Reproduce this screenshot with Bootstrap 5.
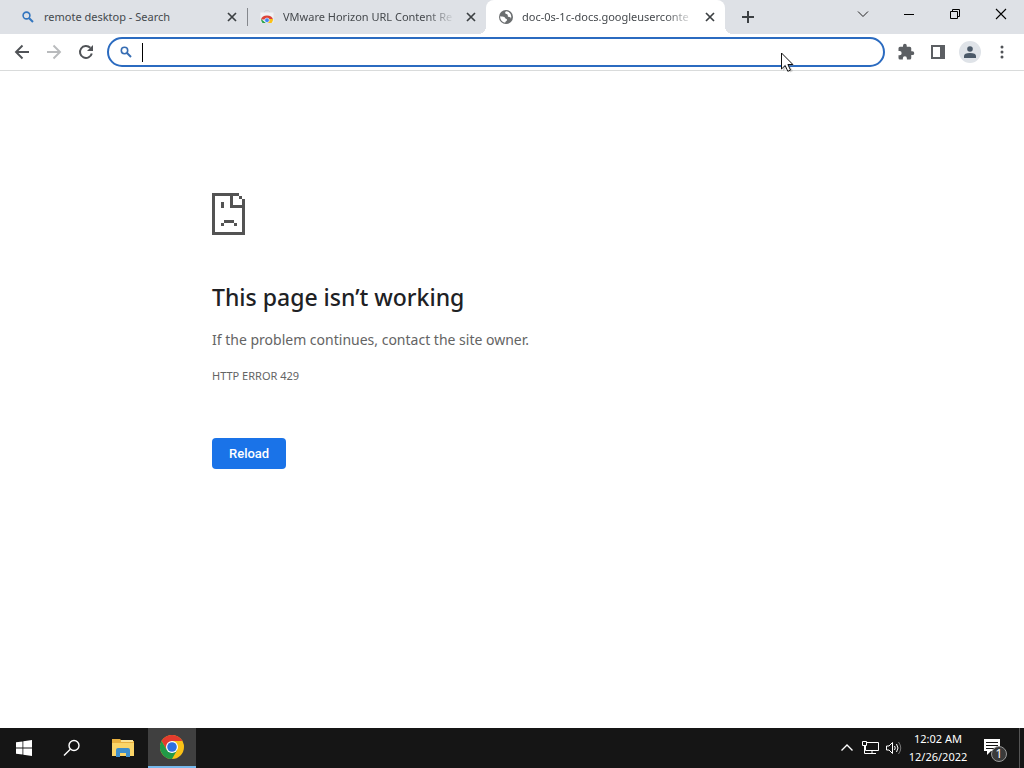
<!DOCTYPE html>
<html lang="en">
<head>
<meta charset="utf-8">
<meta name="viewport" content="width=device-width, initial-scale=1">
<title>This page isn’t working</title>
<link href="https://cdn.jsdelivr.net/npm/bootstrap@5.3.0/dist/css/bootstrap.min.css" rel="stylesheet">
<style>
body{font-family:"Noto Sans","Open Sans",sans-serif;font-size:12px;line-height:16px;color:#3c4043;background:#fff}
svg{display:block;flex:none}
button{border:0;background:transparent;padding:0;color:inherit}
.tabstrip{background:#dee1e6;height:34px}
.tab-item{position:relative;flex:0 1 239px;min-width:0;height:34px;padding-left:12px;padding-right:7px}
.tab-item.idle-sep::after{content:"";position:absolute;right:-1px;top:8px;height:18px;width:1px;background:#85888d}
.tab-item.current{background:#fff;border-radius:8px 8px 0 0}
.tab-item.current::before,.tab-item.current::after{content:"";position:absolute;bottom:0;width:8px;height:8px}
.tab-item.current::before{left:-8px;background:radial-gradient(circle at 0 0,transparent 8px,#fff 8px)}
.tab-item.current::after{right:-8px;background:radial-gradient(circle at 100% 0,transparent 8px,#fff 8px)}
.tab-title{flex:1 1 0;min-width:0;overflow:hidden;white-space:nowrap;font-size:11px;color:#45494d;text-decoration:none;margin-left:8px}
.tab-title.fades{-webkit-mask-image:linear-gradient(to left,transparent,#000 28px);mask-image:linear-gradient(to left,transparent,#000 28px)}
.tab-close{width:16px;height:16px;margin-left:8px}
.newtab{width:28px;height:28px;margin-left:9px}
.winbtn{width:46px;height:28px}
.toolbar{height:37px;border-bottom:1px solid #d9dbdb;padding:0 6px}
.toolbtn{width:32px;height:32px}
.omnibox{position:relative;height:30px;margin:0 5px;border:2px solid #2b6bc0;border-radius:15px;padding-left:10px}
.omnibox input{border:0;outline:0;background:transparent;min-width:0;height:24px}
.caret-line{width:1px;height:19px;background:#000;margin-left:9px}
.pointer{position:absolute;right:88px;top:12px}
.avatar{width:22px;height:22px;border-radius:50%;background:#dfe3e8}
.error-box{max-width:600px;margin:0 auto;padding-top:120px;color:#646464}
.error-box h1{font-size:23px;line-height:30px;font-weight:500;color:#202124;margin:47px 0 16px}
.error-box p{font-size:14px;line-height:24px;margin:0 0 12px}
.error-code{font-size:11px;line-height:24px}
.reload{margin-top:50px;background:#1a73e8;border:0;border-radius:4px;font-family:Roboto,sans-serif;font-weight:500;font-size:13px;line-height:15px;padding:8px 17px;color:#fff}
.taskbar{height:40px;background:#151515;color:#fff}
.taskbtn{width:48px;height:40px}
.taskbtn.explorer{margin-left:3px;margin-right:1px}
.taskbtn.running{background:#404040;border-bottom:2px solid #76b9ed}
.clock{font-size:11px;line-height:18px;width:66px;margin:0 11px 0 3px}
.notify{margin-right:11px}
.show-desktop{width:5px;border-left:1px solid #555}
</style>
</head>
<body class="vh-100 d-flex flex-column overflow-hidden">
<header>
<nav class="tabstrip d-flex ps-2" aria-label="Tabs">
<div class="tab-item idle-sep d-flex align-items-center">
<svg width="16" height="16" viewBox="0 0 16 16" fill="none" stroke="#3476bf"><circle cx="6.500" cy="6.500" r="3.400" stroke-width="1.600"/><path d="M9.200 9.200L13 13" stroke-width="2"/></svg>
<a href="#" class="tab-title">remote desktop - Search</a>
<button class="tab-close" aria-label="Close tab"><svg width="16" height="16" viewBox="0 0 16 16" stroke="#3c4043" stroke-width="1.700"><path d="M4 4l8 8M12 4l-8 8"/></svg></button>
</div>
<div class="tab-item d-flex align-items-center">
<svg width="16" height="16" viewBox="0 0 16 16"><path d="M5.500 3.500V2.600Q5.500 1.500 8 1.500T10.500 2.600V3.500" fill="none" stroke="#d0d2d5"/><path d="M1.500 3.500h13v10H1.500z" fill="#f1f2f4"/><path d="M2 10.500Q3 6.500 8 6.500t6 4z" fill="#dc4337"/><path d="M2 10l5 4H3.500Q2 12.500 2 10z" fill="#2ba24c"/><path d="M10 10h4q.2 2.500-1.500 4H8z" fill="#fbc116"/><circle cx="8" cy="11.300" r="2.300" fill="#4285f4" stroke="#fff" stroke-width=".6"/></svg>
<a href="#" class="tab-title fades">VMware Horizon URL Content Re</a>
<button class="tab-close" aria-label="Close tab"><svg width="16" height="16" viewBox="0 0 16 16" stroke="#3c4043" stroke-width="1.700"><path d="M4 4l8 8M12 4l-8 8"/></svg></button>
</div>
<div class="tab-item current d-flex align-items-center">
<svg width="16" height="16" viewBox="0 0 16 16"><circle cx="8" cy="8" r="7" fill="#6b6e70"/><path d="M8 2.300c-.9.600-1.100 1.500-.6 2.300.5.700 1.600.4 2.200 1.200.5.700-.2 1.500.6 2 .8.500 1.700.2 2.300.8.400.4.300 1 .1 1.700A6 6 0 0 0 10.800 3 6 6 0 0 0 8 2.300zM2.200 7.200c1.300.4 3 .1 4.100.7 1 .5.700 1.500 1.700 1.900.8.300 1.200.6 1 1.400-.3.900-1.500.9-1.900 2.600A5.900 5.900 0 0 1 2.200 7.200z" fill="#fff"/></svg>
<a href="#" class="tab-title fades">doc-0s-1c-docs.googleuserconte</a>
<button class="tab-close" aria-label="Close tab"><svg width="16" height="16" viewBox="0 0 16 16" stroke="#3c4043" stroke-width="1.700"><path d="M4 4l8 8M12 4l-8 8"/></svg></button>
</div>
<button class="newtab d-flex align-items-center justify-content-center align-self-center" aria-label="New tab"><svg width="14" height="14" viewBox="0 0 14 14" stroke="#3c4043" stroke-width="2"><path d="M7 1v12M1 7h12"/></svg></button>
<div class="d-flex ms-auto">
<button class="winbtn d-flex align-items-center justify-content-center" aria-label="Search tabs"><svg width="12" height="12" viewBox="0 0 12 12" fill="none" stroke="#222"><path d="M1 3.500l5 5 5-5"/></svg></button>
<button class="winbtn d-flex align-items-center justify-content-center" aria-label="Minimize"><svg width="10" height="10" viewBox="0 0 10 10" stroke="#000"><path d="M0 5.500h10"/></svg></button>
<button class="winbtn d-flex align-items-center justify-content-center" aria-label="Restore"><svg width="10" height="10" viewBox="0 0 10 10" fill="none" stroke="#000"><path d="M.5 2.500h7v7h-7zM2.500 2.500v-2h7v7h-2"/></svg></button>
<button class="winbtn d-flex align-items-center justify-content-center" aria-label="Close"><svg width="12" height="12" viewBox="0 0 12 12" stroke="#000" stroke-width="1.100"><path d="M1 1l10 10M11 1L1 11"/></svg></button>
</div>
</nav>
<div class="toolbar d-flex align-items-center">
<button class="toolbtn d-flex align-items-center justify-content-center" aria-label="Back"><svg width="16" height="16" viewBox="0 0 16 16" fill="none" stroke="#505357" stroke-width="1.900"><path d="M15 8H2.500M8.500 1.500L2 8l6.500 6.500"/></svg></button>
<button class="toolbtn d-flex align-items-center justify-content-center" aria-label="Forward"><svg width="16" height="16" viewBox="0 0 16 16" fill="none" stroke="#b9bbbd" stroke-width="1.900"><path d="M1 8h12.500M7.500 1.500L14 8l-6.500 6.500"/></svg></button>
<button class="toolbtn d-flex align-items-center justify-content-center" aria-label="Reload page"><svg width="16" height="16" viewBox="0 0 16 16" fill="none" stroke="#505357" stroke-width="2"><path d="M13.800 9.500A6 6 0 1 1 12.300 3.800"/><path d="M15 1v6H9z" fill="#505357" stroke="none"/></svg></button>
<div class="omnibox d-flex align-items-center flex-grow-1">
<svg width="14" height="14" viewBox="0 0 14 14" fill="none" stroke="#366db3"><circle cx="5.500" cy="5.500" r="3.200" stroke-width="1.600"/><path d="M8 8l4 4" stroke-width="1.900"/></svg>
<span class="caret-line"></span>
<input class="flex-grow-1" type="text" aria-label="Address and search bar">
<svg class="pointer" width="15" height="23" viewBox="0 0 15 23"><path d="M3 4v16l4-3.500 3 5 3-1.500-3-5h4z" fill="#888" opacity=".35"/><path d="M1.500 2v16l3.700-3.500 2.600 5.800 2.700-1.200-2.600-5.600h5z" fill="#fff" stroke="#111"/></svg>
</div>
<button class="toolbtn d-flex align-items-center justify-content-center" aria-label="Extensions"><svg width="18" height="18" viewBox="0 0 24 24" fill="#5c5f63"><path d="M20.500 11H19V7a2 2 0 0 0-2-2h-4V3.500a2.500 2.500 0 0 0-5 0V5H4a2 2 0 0 0-2 2v3.800h1.500a2.700 2.700 0 0 1 0 5.400H2V20a2 2 0 0 0 2 2h3.800v-1.500a2.700 2.700 0 0 1 5.400 0V22H17a2 2 0 0 0 2-2v-4h1.500a2.500 2.500 0 0 0 0-5z"/></svg></button>
<button class="toolbtn d-flex align-items-center justify-content-center" aria-label="Side panel"><svg width="14" height="14" viewBox="0 0 14 14"><path d="M0 0h14v14H0zM2 2v10h7V2z" fill="#5c5f63" fill-rule="evenodd"/></svg></button>
<button class="toolbtn d-flex align-items-center justify-content-center" aria-label="Profile"><span class="avatar d-flex align-items-center justify-content-center"><svg width="12" height="12" viewBox="0 0 12 12" fill="#4b5968"><circle cx="6" cy="3" r="2.800"/><path d="M0 12V10q0-3 6-3t6 3v2z"/></svg></span></button>
<button class="toolbtn d-flex align-items-center justify-content-center" aria-label="Menu"><svg width="4" height="14" viewBox="0 0 4 14" fill="#505357"><circle cx="2" cy="2" r="1.500"/><circle cx="2" cy="7" r="1.500"/><circle cx="2" cy="12" r="1.500"/></svg></button>
</div>
</header>
<main class="flex-grow-1">
<div class="error-box">
<svg width="36" height="44" viewBox="0 0 36 44" fill="#535353" shape-rendering="crispEdges"><path d="M0 2h27v3H3v36h27V17H18V5h3v9h9v-3h3v33H0z"/><path d="M27 5h3v3h-3zM30 8h3v3h-3zM9 11h3v6H9zM12 29h10v3H12zM9 32h3v3H9zM22 32h3v3h-3z"/></svg>
<h1>This page isn’t working</h1>
<p>If the problem continues, contact the site owner.</p>
<div class="error-code">HTTP ERROR 429</div>
<button class="reload">Reload</button>
</div>
</main>
<footer class="taskbar d-flex">
<button class="taskbtn d-flex align-items-center justify-content-center" aria-label="Start"><svg width="16" height="16" viewBox="0 0 16 16" fill="#fff"><path d="M0 2.300l6.500-.9v6.200H0zM7.300 1.300L16 0v7.600H7.300zM0 8.400h6.500v6.200L0 13.700zM7.300 8.400H16V16l-8.700-1.300z"/></svg></button>
<button class="taskbtn d-flex align-items-center justify-content-center" aria-label="Search"><svg width="18" height="18" viewBox="0 0 18 18" fill="none" stroke="#fff" stroke-width="1.400"><circle cx="11" cy="6.500" r="5"/><path d="M7.300 10.200L1 16.500"/></svg></button>
<button class="taskbtn explorer d-flex align-items-center justify-content-center" aria-label="File Explorer"><svg width="22" height="18" viewBox="0 0 22 18"><path d="M0 0h8l2 2h12v15H0z" fill="#e9b13f"/><path d="M0 4h22v13H0z" fill="#fbd568"/><path d="M9 1h12v2H9z" fill="#fbe396"/><path d="M4 18v-7q0-2 2-2h10q2 0 2 2v7h-4v-4H8v4z" fill="#3e8ecb"/></svg></button>
<button class="taskbtn running d-flex align-items-center justify-content-center" aria-label="Google Chrome"><svg width="24" height="24" viewBox="0 0 24 24"><circle cx="12" cy="12" r="12" fill="#fbc116"/><path d="M1.600 6A12 12 0 0 1 22.400 6H12L6.800 15z" fill="#e33b2e"/><path d="M1.600 6A12 12 0 0 0 12 24l5.200-9H6.800z" fill="#229a48"/><circle cx="12" cy="12" r="6" fill="#fff"/><circle cx="12" cy="12" r="4.800" fill="#2f6fde"/></svg></button>
<div class="d-flex align-items-center ms-auto">
<button aria-label="Show hidden icons"><svg width="14" height="12" viewBox="0 0 14 12" fill="none" stroke="#fff" stroke-width="1.400"><path d="M1.500 8.500L7 3l5.500 5.500"/></svg></button>
<button class="ms-2" aria-label="Network"><svg width="18" height="16" viewBox="0 0 18 16" fill="none" stroke="#fff"><path d="M5 2.500h11.500v8H3.500V6M10 10.500v3M6 13.500h8M.5 1.500h4v4h-4zM2.500 5.500v8h4"/></svg></button>
<button class="ms-1" aria-label="Volume"><svg width="18" height="16" viewBox="0 0 18 16" fill="none" stroke="#fff"><path d="M2.500 6v4H5l3.500 3.500v-11L5 6zM10.500 6q1.500 2 0 4M12.500 4q3 4 0 8"/><path d="M14.500 2q4.500 6 0 12" stroke="#777"/></svg></button>
<time class="clock text-center text-nowrap" datetime="2022-12-26T00:02">12:02 AM<br>12/26/2022</time>
<button class="notify" aria-label="Notifications"><svg width="26" height="30" viewBox="0 0 26 30"><path d="M2 6h16v12H9l-4 4v-4H2z" fill="#fff"/><path d="M4 9.500h12M4 12.500h12M4 15.500h8" stroke="#151515"/><circle cx="17" cy="21" r="7.500" fill="#3a3a3a" stroke="#999"/><text x="17" y="25" text-anchor="middle" font-size="12" fill="#fff">1</text></svg></button>
</div>
<span class="show-desktop"></span>
</footer>
<script src="https://cdn.jsdelivr.net/npm/bootstrap@5.3.0/dist/js/bootstrap.bundle.min.js"></script>
</body>
</html>
